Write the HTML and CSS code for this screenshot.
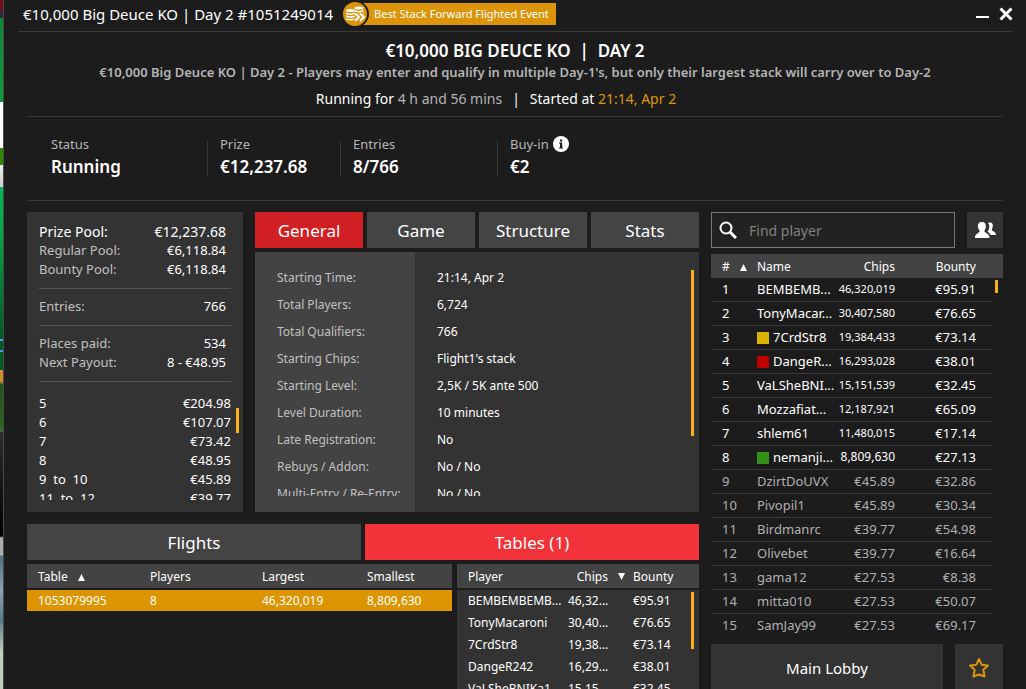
FILE: index.html
```
<!DOCTYPE html>
<html lang="en">
<head>
    <meta charset="UTF-8">
    <meta name="viewport" content="width=device-width, initial-scale=1.0">
    <link rel="stylesheet" href="styles.css">
    <title>Tournament Lobby</title>
</head>
<body>
    <div class="desktop-edge"></div>
    <div class="window">
        <header class="title-bar">
            <span class="window-title">€10,000 Big Deuce KO | Day 2 #1051249014</span>
            <span class="event-badge">
                <svg class="badge-icon" width="26" height="26" viewBox="0 0 26 26">
                    <circle cx="13" cy="13" r="13" fill="#1c1c1c"/>
                    <circle cx="12" cy="13" r="12" fill="#dc950a"/>
                    <g fill="#fff">
                        <ellipse cx="7.500" cy="9.500" rx="4.500" ry="1.500"/>
                        <ellipse cx="16" cy="7" rx="4.500" ry="1.500"/>
                        <path d="M3 11.500q4.500 2 9 0v1.500q-4.500 2-9 0zM3 14.300q4.500 2 9 0v1.500q-4.500 2-9 0zM3 17q4.500 2 9 0v1.500q-4.500 2-9 0z"/>
                        <path d="M11.500 9q4.500 2 9 0v1.500q-4.500 2-9 0zM13 12.500q4 1 8-.8v1.500q-3 1.300-6 1z"/>
                    </g>
                    <path d="M12 12.500l4 3.500-4 4M17 12.500l4 3.500-4 4" fill="none" stroke="#dc950a" stroke-width="4"/>
                    <path d="M12 12.500l4 3.500-4 4M17 12.500l4 3.500-4 4" fill="none" stroke="#fff" stroke-width="2"/>
                </svg>
                <span class="badge-text">Best Stack Forward Flighted Event</span>
            </span>
            <div class="window-buttons">
                <button type="button" aria-label="Minimize">
                    <svg width="13" height="14" viewBox="0 0 13 14"><path d="M0 10h13" stroke="#fff" stroke-width="2"/></svg>
                </button>
                <button type="button" aria-label="Close">
                    <svg width="14" height="14" viewBox="0 0 14 14"><path d="M1.500 1.500l11 11M12.500 1.500l-11 11" stroke="#fff" stroke-width="3"/></svg>
                </button>
            </div>
        </header>

        <section class="intro">
            <h1>€10,000 BIG DEUCE KO &nbsp;|&nbsp; DAY 2</h1>
            <p class="note">€10,000 Big Deuce KO | Day 2 - Players may enter and qualify in multiple Day-1's, but only their largest stack will carry over to Day-2</p>
            <p class="running">Running for <span class="muted">4 h and 56 mins</span><span class="bar">|</span>Started at <span class="start-time">21:14, Apr 2</span></p>
        </section>

        <section class="summary">
            <div class="summary-item"><span>Status</span><strong>Running</strong></div>
            <div class="summary-item"><span>Prize</span><strong>€12,237.68</strong></div>
            <div class="summary-item"><span>Entries</span><strong>8/766</strong></div>
            <div class="summary-item">
                <span>Buy-in
                    <svg class="info-icon" width="16" height="16" viewBox="0 0 16 16">
                        <circle cx="8" cy="8" r="8" fill="#fff"/>
                        <path d="M7 3.500h2.200v2H7zM6 6.500h3.200v5H10v1H6v-1h1v-4H6z" fill="#1c1c1c"/>
                    </svg>
                </span>
                <strong>€2</strong>
            </div>
        </section>

        <main class="content">
            <div class="left">
                <div class="overview">
                    <section class="prizes">
                        <div class="prize-group">
                            <div class="prize-row total"><span>Prize Pool:</span><b>€12,237.68</b></div>
                            <div class="prize-row"><span>Regular Pool:</span><b>€6,118.84</b></div>
                            <div class="prize-row"><span>Bounty Pool:</span><b>€6,118.84</b></div>
                        </div>
                        <div class="prize-group">
                            <div class="prize-row"><span>Entries:</span><b>766</b></div>
                        </div>
                        <div class="prize-group">
                            <div class="prize-row"><span>Places paid:</span><b>534</b></div>
                            <div class="prize-row"><span>Next Payout:</span><b>8 - €48.95</b></div>
                        </div>
                        <div class="payouts">
                            <table class="payout-table">
                                <tr><td>5</td><td>€204.98</td></tr>
                                <tr><td>6</td><td>€107.07</td></tr>
                                <tr><td>7</td><td>€73.42</td></tr>
                                <tr><td>8</td><td>€48.95</td></tr>
                                <tr><td>9 &nbsp;to&nbsp; 10</td><td>€45.89</td></tr>
                                <tr><td>11 &nbsp;to&nbsp; 12</td><td>€39.77</td></tr>
                            </table>
                            <span class="thumb"></span>
                        </div>
                    </section>

                    <section class="details">
                        <nav class="tabs">
                            <button type="button" class="tab active">General</button>
                            <button type="button" class="tab">Game</button>
                            <button type="button" class="tab">Structure</button>
                            <button type="button" class="tab">Stats</button>
                        </nav>
                        <div class="general">
                            <dl class="general-list">
                                <dt>Starting Time:</dt><dd>21:14, Apr 2</dd>
                                <dt>Total Players:</dt><dd>6,724</dd>
                                <dt>Total Qualifiers:</dt><dd>766</dd>
                                <dt>Starting Chips:</dt><dd>Flight1's stack</dd>
                                <dt>Starting Level:</dt><dd>2,5K / 5K ante 500</dd>
                                <dt>Level Duration:</dt><dd>10 minutes</dd>
                                <dt>Late Registration:</dt><dd>No</dd>
                                <dt>Rebuys / Addon:</dt><dd>No / No</dd>
                                <dt>Multi-Entry / Re-Entry:</dt><dd>No / No</dd>
                            </dl>
                            <span class="thumb"></span>
                        </div>
                    </section>
                </div>

                <nav class="tabs lower-tabs">
                    <button type="button" class="tab">Flights</button>
                    <button type="button" class="tab bright">Tables (1)</button>
                </nav>

                <div class="lower">
                    <div class="tables-pane">
                        <table class="grid tables-grid">
                            <thead>
                                <tr>
                                    <th>Table <svg class="sort" width="7" height="7" viewBox="0 0 7 7"><path d="M0 7h7L3.500 0z" fill="#fff"/></svg></th>
                                    <th>Players</th>
                                    <th>Largest</th>
                                    <th>Smallest</th>
                                </tr>
                            </thead>
                            <tbody>
                                <tr class="selected"><td>1053079995</td><td>8</td><td>46,320,019</td><td>8,809,630</td></tr>
                            </tbody>
                        </table>
                    </div>
                    <div class="seats-pane">
                        <table class="grid seats-grid">
                            <thead>
                                <tr>
                                    <th class="seat-player">Player</th>
                                    <th class="seat-chips">Chips</th>
                                    <th class="seat-sort"><svg width="7" height="7" viewBox="0 0 7 7"><path d="M0 0h7L3.500 7z" fill="#fff"/></svg></th>
                                    <th>Bounty</th>
                                    <th class="seat-scroll"></th>
                                </tr>
                            </thead>
                            <tbody>
                                <tr><td>BEMBEMBEMB...</td><td>46,32...</td><td></td><td>€95.91</td><td rowspan="5" class="scroll"><span class="thumb"></span></td></tr>
                                <tr><td>TonyMacaroni</td><td>30,40...</td><td></td><td>€76.65</td></tr>
                                <tr><td>7CrdStr8</td><td>19,38...</td><td></td><td>€73.14</td></tr>
                                <tr><td>DangeR242</td><td>16,29...</td><td></td><td>€38.01</td></tr>
                                <tr><td>VaLSheBNIKa1</td><td>15,15...</td><td></td><td>€32.45</td></tr>
                            </tbody>
                        </table>
                    </div>
                </div>
            </div>

            <aside class="right">
                <div class="search-row">
                    <label class="search">
                        <svg width="18" height="18" viewBox="0 0 18 18">
                            <circle cx="7" cy="7" r="5.500" fill="none" stroke="#fff" stroke-width="2"/>
                            <path d="M11 11l6 6" stroke="#fff" stroke-width="3"/>
                        </svg>
                        <input type="text" placeholder="Find player" aria-label="Find player">
                    </label>
                    <button type="button" class="friends" aria-label="Friends">
                        <svg width="21" height="16" viewBox="0 0 21 16" fill="#fff">
                            <path d="M13 1c1-.7 4-.5 4.500 1 .6 1.500.3 3.500-.7 5.500 0 2 4.200 1.800 4.200 5.500h-5.500c-.4-1.500-1.500-2.400-3-3.200 1-1.500 1.800-3 1.800-5.300 0-1.500-.5-2.700-1.300-3.500z"/>
                            <path d="M7 0c3 0 4.200 2 3.800 5-.3 2-.8 3-1.500 3.800 0 2.500 5.200 2.200 5.200 7.200H0c0-5 4.800-4.700 4.800-7.200C4 8 3.300 7 3 5 2.500 2 4 0 7 0z"/>
                        </svg>
                    </button>
                </div>

                <table class="players">
                    <thead>
                        <tr>
                            <th class="col-rank">#<svg class="sort" width="7" height="7" viewBox="0 0 7 7"><path d="M0 7h7L3.500 0z" fill="#fff"/></svg></th>
                            <th class="col-name">Name</th>
                            <th class="col-chips">Chips</th>
                            <th class="col-bounty">Bounty</th>
                            <th class="col-scroll"></th>
                        </tr>
                    </thead>
                    <tbody>
                        <tr><td>1</td><td>BEMBEMB...</td><td class="small">46,320,019</td><td>€95.91</td><td rowspan="15" class="scroll"><span class="thumb"></span></td></tr>
                        <tr><td>2</td><td>TonyMacar...</td><td class="small">30,407,580</td><td>€76.65</td></tr>
                        <tr><td>3</td><td><i class="mark yellow"></i>7CrdStr8</td><td class="small">19,384,433</td><td>€73.14</td></tr>
                        <tr><td>4</td><td><i class="mark red"></i>DangeR...</td><td class="small">16,293,028</td><td>€38.01</td></tr>
                        <tr><td>5</td><td>VaLSheBNI...</td><td class="small">15,151,539</td><td>€32.45</td></tr>
                        <tr><td>6</td><td>Mozzafiat...</td><td class="small">12,187,921</td><td>€65.09</td></tr>
                        <tr><td>7</td><td>shlem61</td><td class="small">11,480,015</td><td>€17.14</td></tr>
                        <tr><td>8</td><td><i class="mark green"></i>nemanji...</td><td class="medium">8,809,630</td><td>€27.13</td></tr>
                        <tr class="out"><td>9</td><td>DzirtDoUVX</td><td>€45.89</td><td>€32.86</td></tr>
                        <tr class="out"><td>10</td><td>Pivopil1</td><td>€45.89</td><td>€30.34</td></tr>
                        <tr class="out"><td>11</td><td>Birdmanrc</td><td>€39.77</td><td>€54.98</td></tr>
                        <tr class="out"><td>12</td><td>Olivebet</td><td>€39.77</td><td>€16.64</td></tr>
                        <tr class="out"><td>13</td><td>gama12</td><td>€27.53</td><td>€8.38</td></tr>
                        <tr class="out"><td>14</td><td>mitta010</td><td>€27.53</td><td>€50.07</td></tr>
                        <tr class="out"><td>15</td><td>SamJay99</td><td>€27.53</td><td>€69.17</td></tr>
                    </tbody>
                </table>

                <div class="actions">
                    <button type="button" class="lobby-btn">Main Lobby</button>
                    <button type="button" class="star-btn" aria-label="Favourite">
                        <svg width="22" height="22" viewBox="0 0 22 22"><path d="M11 2l2.600 5.700 6.400.800-4.700 4.200 1.300 6.800-5.600-2-5.600 2 1.300-6.800L2 8.500l6.400-.8z" fill="none" stroke="#dc950a" stroke-width="2" stroke-linejoin="round"/></svg>
                    </button>
                </div>
            </aside>
        </main>
    </div>
</body>
</html>
```
FILE: styles.css
```
* {
    box-sizing: border-box;
}

body {
    margin: 0;
    display: flex;
    height: 100vh;
    overflow: hidden;
    background-color: #1c1c1c;
    color: #fff;
    font-family: "Noto Sans", sans-serif;
    font-size: 13px;
}

button {
    border: none;
    padding: 0;
    color: #fff;
    font-family: inherit;
    cursor: pointer;
}

svg {
    display: block;
}

table {
    border-spacing: 0;
    table-layout: fixed;
    width: 100%;
}

th, td {
    padding: 0;
    font-weight: normal;
    text-align: left;
    white-space: nowrap;
}

/* strip of the desktop left of the window */
.desktop-edge {
    flex: none;
    width: 4px;
    border-right: 1px solid #4a4a4a;
    background: linear-gradient(#6b1018 11px, #2a2a44 11px, #2a2a44 18px, #0c8a35 18px, #0c9a3c 102px, #fff 102px, #fff 148px, #2e8b00 148px, #2e8b00 165px, #eee 165px, #ccc 187px, #00b956 187px, #00a848 230px, #005a24 339px, #5a90f0 339px, #5a90f0 341px, #005a24 341px, #005a24 350px, #5a90f0 350px, #5a90f0 352px, #005a24 352px, #005a24 370px, #d08a30 370px, #d08a30 381px, #24521a 385px, #2b6a1a 430px, #777 431px, #2b2d30 432px, #000 536px, #a9b0ae 538px, #a9b0ae 555px, #4f7080 556px, #8aa3ac 590px, #5a7a8c 620px, #c3cfba 652px);
}

.window {
    flex: 1;
    min-width: 0;
}

.title-bar {
    display: flex;
    align-items: center;
    height: 32px;
    margin: 0 13px 0 14px;
    padding: 0 0 3px 5px;
    border-bottom: 1px solid #3a3a3a;
}

.window-title {
    font-size: 15px;
}

.event-badge {
    display: flex;
    align-items: center;
    margin-left: 10px;
}

.badge-icon {
    z-index: 1;
    margin-right: -13px;
}

.badge-text {
    height: 22px;
    line-height: 22px;
    padding: 0 7px 0 18px;
    background-color: #dc950a;
    font-size: 11px;
}

.window-buttons {
    display: flex;
    gap: 10px;
    margin-left: auto;
}

.window-buttons button {
    background: none;
}

.intro {
    margin: 0 23px;
    padding: 8px 0 7px;
    border-bottom: 1px solid #3a3a3a;
    text-align: center;
}

.intro h1 {
    margin: 0;
    font-size: 17px;
    font-weight: 600;
    line-height: 22px;
}

.note {
    margin: 0;
    color: #b4b4b4;
    font-size: 13px;
    font-weight: 600;
    line-height: 20px;
}

.running {
    margin: 7px 0 0;
    padding-right: 38px;
    font-size: 14px;
    line-height: 20px;
}

.muted {
    color: #b4b4b4;
}

.bar {
    margin: 0 10px;
}

.start-time {
    color: #dc950a;
}

.summary {
    display: grid;
    grid-template-columns: 181px 133px 157px 1fr;
    margin: 0 23px;
    padding: 24px 0 23px;
    border-bottom: 1px solid #3a3a3a;
}

.summary-item {
    display: flex;
    flex-direction: column;
    justify-content: space-between;
    height: 36px;
    padding-left: 12px;
    border-right: 1px solid #3a3a3a;
}

.summary-item:first-child {
    padding-left: 24px;
}

.summary-item:last-child {
    border-right: none;
}

.summary-item span {
    display: flex;
    gap: 4px;
    color: #b4b4b4;
    line-height: 6px;
}

.info-icon {
    margin: -5px 0;
}

.summary-item strong {
    font-size: 17px;
    font-weight: 600;
    line-height: 20px;
}

.content {
    display: grid;
    grid-template-columns: 1fr 292px;
    gap: 12px;
    margin: 11px 23px 0;
}

.overview {
    display: grid;
    grid-template-columns: 216px 1fr;
    gap: 12px;
    height: 300px;
}

.thumb {
    display: block;
    flex: none;
    width: 3px;
    background-color: #fbb11f;
}

.prizes {
    padding: 2px 12px 12px;
    background-color: #333;
}

.prize-group {
    padding: 8px 0 9px;
    border-bottom: 1px solid #555;
}

.prize-row {
    display: flex;
    justify-content: space-between;
    padding-right: 5px;
    line-height: 19px;
    color: #c0c0c0;
}

.prize-row b {
    color: #fff;
    font-weight: normal;
}

.prize-row.total {
    color: #fff;
    font-size: 14px;
}

.payouts {
    display: flex;
    gap: 5px;
    height: 118px;
    margin-right: -8px;
    padding-top: 12px;
    overflow: hidden;
}

.payout-table {
    align-self: flex-start;
}

.payout-table td {
    height: 19px;
    line-height: 19px;
}

.payout-table td:last-child {
    text-align: right;
}

.payouts .thumb {
    height: 25px;
    margin-top: 14px;
}

.tabs {
    display: flex;
    gap: 4px;
}

.tab {
    flex: 1;
    height: 36px;
    background-color: #444;
    font-size: 17px;
}

.tab.active {
    background-color: #d12024;
}

.tab.bright {
    background-color: #f13339;
}

.general {
    display: flex;
    justify-content: space-between;
    height: 260px;
    margin-top: 4px;
    padding: 12px 5px 16px 22px;
    background: linear-gradient(to right, #434343 160px, #333 160px);
}

.general-list {
    display: grid;
    grid-template-columns: 160px 1fr;
    grid-auto-rows: 27px;
    flex: 1;
    margin: 0;
    overflow: hidden;
    font-size: 12px;
    line-height: 27px;
}

.general-list dt {
    color: #c0c0c0;
}

.general-list dd {
    margin: 0;
}

.general .thumb {
    height: 166px;
    margin-top: 6px;
}

.lower-tabs {
    margin-top: 12px;
}

.lower {
    display: grid;
    grid-template-columns: 1fr 242px;
    gap: 5px;
    margin-top: 4px;
}

.grid {
    font-size: 12px;
}

.grid th {
    height: 26px;
    border-bottom: 2px solid #1c1c1c;
    background-color: #434343;
}

.sort {
    display: inline-block;
    margin-left: 7px;
}

.tables-grid th,
.tables-grid td {
    width: 112px;
    padding-left: 11px;
}

.tables-grid th:nth-child(3) {
    width: 105px;
}

.tables-grid th:last-child {
    width: auto;
}

.selected td {
    height: 21px;
    background-color: #dc9500;
}

.seats-grid th:first-child,
.seats-grid td:first-child {
    padding-left: 11px;
}

.seats-grid td {
    height: 22px;
    padding-bottom: 2px;
    background-color: #333;
}

.seat-player {
    width: 104px;
}

.seats-grid td:nth-child(2) {
    padding-left: 7px;
}

.seats-grid .seat-chips {
    width: 47px;
    text-align: right;
}

.seat-sort {
    width: 25px;
    padding-left: 10px;
}

.seat-scroll {
    width: 8px;
}

.seats-grid .scroll,
.players .scroll {
    vertical-align: top;
    border: none;
}

.seats-grid .thumb {
    height: 57px;
    margin-top: 2px;
}

.search-row {
    display: flex;
    gap: 12px;
}

.search {
    display: flex;
    flex: 1;
    align-items: center;
    gap: 12px;
    min-width: 0;
    height: 36px;
    padding: 0 7px;
    border: 1px solid #777;
    background-color: #222;
}

.search input {
    flex: 1;
    min-width: 0;
    padding: 0;
    border: none;
    outline: none;
    background: none;
    color: #fff;
    font-family: inherit;
    font-size: 14px;
}

.search input::placeholder {
    color: #808080;
}

.friends {
    display: grid;
    place-items: center;
    flex: none;
    width: 36px;
    background-color: #333;
}

.players {
    margin-top: 6px;
}

.players th {
    height: 24px;
    background-color: #434343;
    font-size: 12px;
}

.players td {
    height: 24px;
    padding-bottom: 2px;
    border-bottom: 1px solid #3a3a3a;
    line-height: 18px;
}

.players tr:last-child td {
    border-bottom: none;
}

.players th:first-child,
.players td:first-child {
    padding-left: 11px;
}

.players .col-rank {
    width: 46px;
}

.players .sort {
    margin-left: 10px;
}

.players .col-name {
    width: 80px;
}

.players .col-chips {
    width: 58px;
}

.players .col-scroll {
    width: 11px;
}

.players th:nth-child(3),
.players td:nth-child(3) {
    text-align: right;
}

.players th:nth-child(4),
.players td:nth-child(4) {
    padding-right: 16px;
    text-align: right;
}

.players .small {
    font-size: 11px;
}

.players .medium {
    font-size: 12px;
}

.players .out {
    color: #b0b0b0;
}

.players .thumb {
    height: 13px;
    margin: 2px 0 0 3px;
}

.mark {
    display: inline-block;
    width: 12px;
    height: 12px;
    margin-right: 4px;
    vertical-align: -2px;
}

.yellow {
    background-color: #dcb400;
}

.red {
    background-color: #c00000;
}

.green {
    background-color: #35901a;
}

.actions {
    display: flex;
    gap: 12px;
    margin-top: 6px;
}

.actions button {
    display: grid;
    place-items: center;
    height: 48px;
    background-color: #333;
    font-size: 15px;
}

.actions .lobby-btn {
    flex: 1;
}

.actions .star-btn {
    flex: none;
    width: 48px;
}
```
